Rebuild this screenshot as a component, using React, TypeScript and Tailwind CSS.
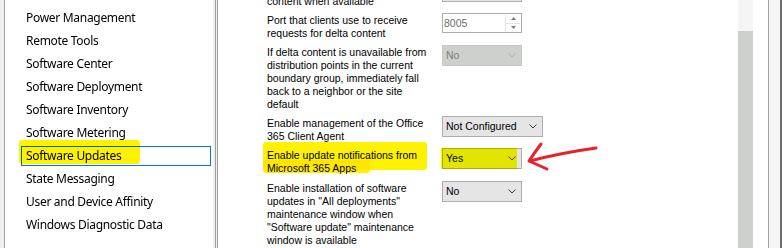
import React from "react";

const listItems = [
  "Power Management",
  "Remote Tools",
  "Software Center",
  "Software Deployment",
  "Software Inventory",
  "Software Metering",
  "Software Updates",
  "State Messaging",
  "User and Device Affinity",
  "Windows Diagnostic Data",
];

function Chevron({ color = "#3c3c3c" }: { color?: string }) {
  return (
    <svg width="8" height="5" viewBox="0 0 8 5" className="shrink-0">
      <polyline points="0.5,0.5 4,4 7.5,0.5" fill="none" stroke={color} strokeWidth="1" />
    </svg>
  );
}

function Combo({
  value,
  width,
  disabled,
}: {
  value: string;
  width: string;
  disabled?: boolean;
}) {
  return (
    <div
      className={
        "flex h-[21px] items-center justify-between border pl-[3px] pr-[5px] " +
        width +
        (disabled
          ? " border-[#c6c8c6] bg-[#cdd0cd] text-[#7a7a7a]"
          : " border-[#adadad] bg-[#e5e5e5] text-black")
      }
    >
      <span className="leading-none">{value}</span>
      <Chevron color={disabled ? "#b0b2b0" : "#3c3c3c"} />
    </div>
  );
}

function Spin() {
  return (
    <div className="flex h-[20px] w-[80px] items-stretch border border-[#adadad] bg-white">
      <div className="flex flex-1 items-center pl-[1px] leading-none text-[#6d6d6d]">8005</div>
      <div className="my-[1px] mr-[1px] flex w-[15px] flex-col border-l border-[#e3e3e3]">
        <div className="flex flex-1 items-center justify-center border-b border-[#e3e3e3]">
          <svg width="5" height="3" viewBox="0 0 5 3">
            <polygon points="0,3 2.5,0 5,3" fill="#7a7a7a" />
          </svg>
        </div>
        <div className="flex flex-1 items-center justify-center">
          <svg width="5" height="3" viewBox="0 0 5 3">
            <polygon points="0,0 2.5,3 5,0" fill="#7a7a7a" />
          </svg>
        </div>
      </div>
    </div>
  );
}

function Row({
  lines,
  control,
  extra = "",
}: {
  lines: string[];
  control: React.ReactNode;
  extra?: string;
}) {
  return (
    <div className={"flex items-start " + extra}>
      <div className="relative top-[1px] w-[175px] leading-[13px]">
        {lines.map((l, i) => (
          <div key={i} className="whitespace-nowrap">
            {l}
          </div>
        ))}
      </div>
      {control}
    </div>
  );
}

export default function App() {
  return (
    <div className="relative flex h-[248px] w-[784px] overflow-hidden bg-white">
      <div className="w-[4px] bg-[#f0f0f0]" />
      <div className="w-[1px] bg-[#a0a0a0]" />
      {/* list */}
      <div className="relative w-[208px] bg-white pt-[6px] font-['Noto_Sans',sans-serif] text-[12px] tracking-[-0.3px] text-black">
        {listItems.map((it) => (
          <div key={it} className="flex h-[23px] items-center pl-[16px]">
            <div
              className={
                "flex h-[20px] w-[190px] items-center border pl-[4px] leading-none " +
                (it === "Software Updates" ? "border-[#0078d7]" : "border-transparent")
              }
            >
              {it}
            </div>
          </div>
        ))}
        <div className="pointer-events-none absolute left-[14px] top-[140px] h-[24px] w-[121px] rounded-[3px] bg-[#fff200] mix-blend-multiply" />
      </div>
      <div className="w-[2px] bg-[#f0f0f0]" />
      <div className="w-[1px] bg-[#a0a0a0]" />
      <div className="w-[1px] bg-[#f0f0f0]" />
      <div className="w-[1px] bg-[#a0a0a0]" />
      {/* content */}
      <div className="relative w-[520px] bg-white font-['Liberation_Sans',Arial,sans-serif] text-[10.5px] text-black">
        <div className="mt-[-19px] flex flex-col gap-[6px] pl-[49px]">
          <Row lines={["Allow clients to download delta", "content when available"]} control={<Combo value="Yes" width="w-[80px]" />} />
          <Row lines={["Port that clients use to receive", "requests for delta content"]} control={<Spin />} />
          <Row
            lines={[
              "If delta content is unavailable from",
              "distribution points in the current",
              "boundary group, immediately fall",
              "back to a neighbor or the site",
              "default",
            ]}
            control={<Combo value="No" width="w-[80px]" disabled />}
          />
          <Row
            lines={["Enable management of the Office", "365 Client Agent"]}
            control={<Combo value="Not Configured" width="w-[101px]" />}
          />
          <Row
            lines={["Enable update notifications from", "Microsoft 365 Apps"]}
            control={<Combo value="Yes" width="w-[80px]" />}
          />
          <Row
            extra="mt-[1px]"
            lines={[
              "Enable installation of software",
              "updates in \"All deployments\"",
              "maintenance window when",
              "\"Software update\" maintenance",
              "window is available",
            ]}
            control={<Combo value="No" width="w-[80px]" />}
          />
        </div>
        {/* highlights */}
        <div className="pointer-events-none absolute left-[45px] top-[142px] h-[28px] w-[164px] rounded-[3px] bg-[#fff200] mix-blend-multiply" />
        <div className="pointer-events-none absolute left-[45px] top-[160px] h-[13px] w-[107px] rounded-[3px] bg-[#fff200] mix-blend-multiply" />
        <div className="pointer-events-none absolute left-[223px] top-[148px] h-[21px] w-[76px] bg-[#fdff00] mix-blend-multiply" />
        {/* red arrow */}
        <svg className="pointer-events-none absolute left-0 top-0" width="520" height="248" viewBox="218 0 520 248">
          <path d="M596 148 Q560 153 530 161" fill="none" stroke="#e8212b" strokeWidth="3" strokeLinecap="round" />
          <path d="M541 144 Q535 152 529 161 Q538 165 547 169" fill="none" stroke="#e8212b" strokeWidth="3" strokeLinecap="round" strokeLinejoin="round" />
        </svg>
      </div>
      {/* scrollbar */}
      <div className="flex w-[15px] flex-col">
        <div className="h-[31px] bg-[#f5f5f5]" />
        <div className="flex-1 bg-[#cdd1cd]" />
      </div>
      <div className="w-[15px] bg-white" />
      <div className="w-[1px] bg-[#a0a0a0]" />
      <div className="w-[11px] bg-[#f5f5f5]" />
      <div className="w-[2px] bg-[#6d6d6d]" />
      <div className="w-[2px] bg-white" />
    </div>
  );
}
